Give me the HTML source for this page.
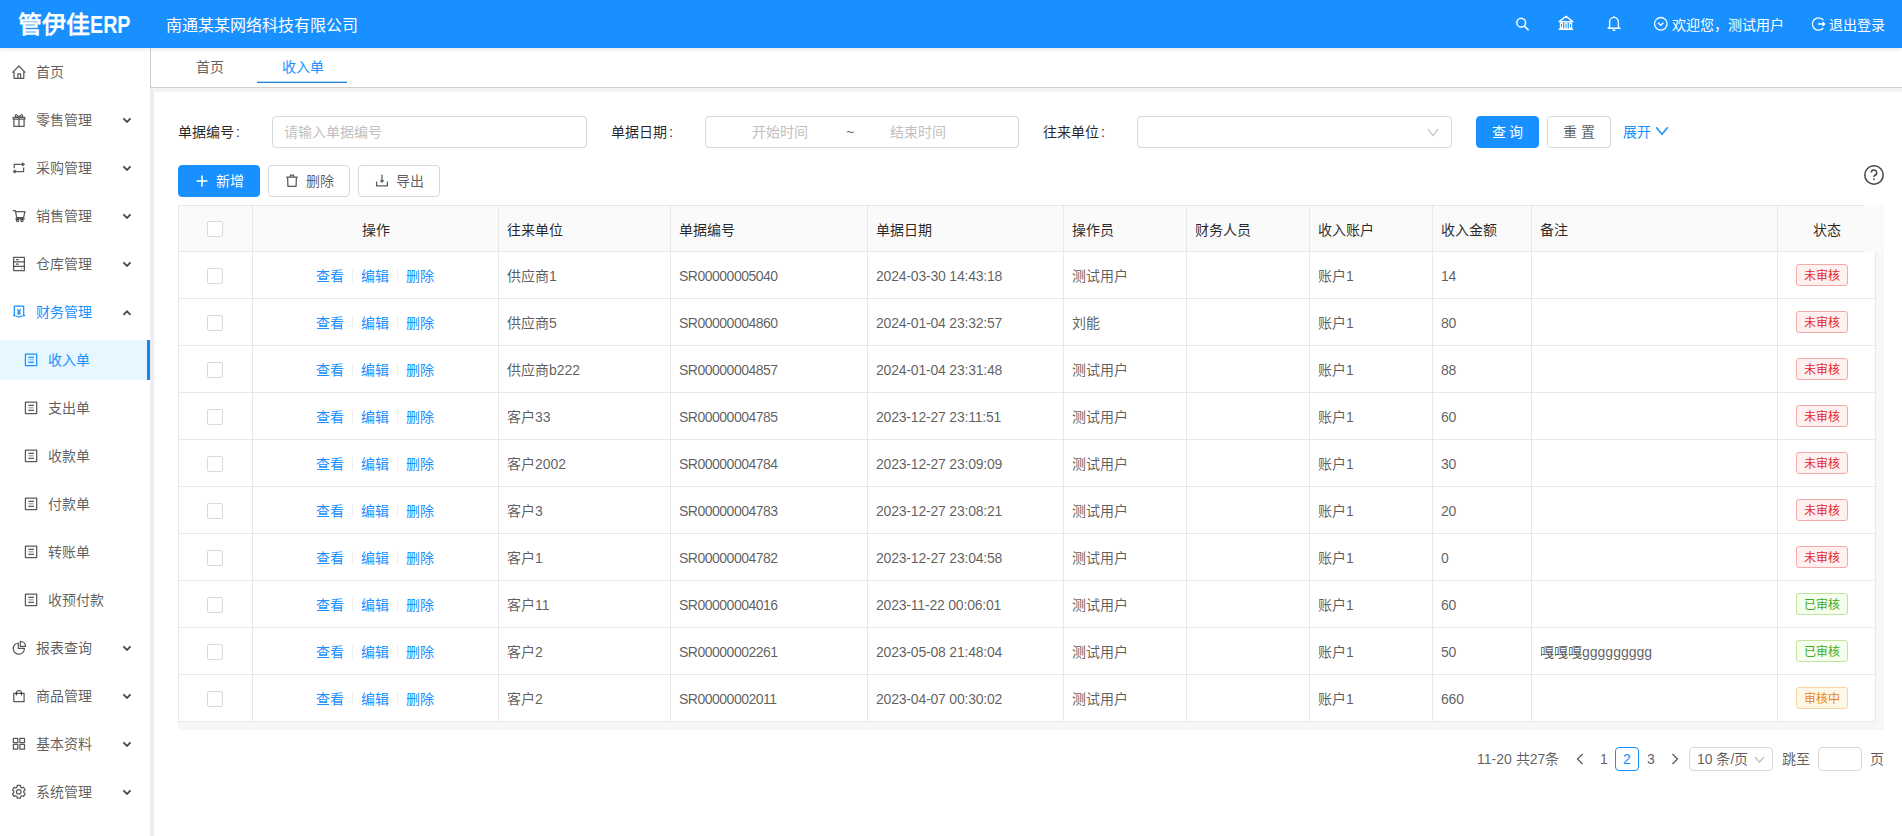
<!DOCTYPE html>
<html lang="zh-CN"><head><meta charset="utf-8"><style>
*{box-sizing:border-box;margin:0;padding:0}
html,body{width:1902px;height:836px;overflow:hidden;background:#fff}
body{font-family:"Liberation Sans",sans-serif;font-size:14px;color:rgba(0,0,0,.65);position:relative}
.abs{position:absolute}
.hdr{position:absolute;left:0;top:0;width:1902px;height:48px;background:#1890ff;color:#fff;z-index:5;box-shadow:0 1px 4px rgba(0,21,41,.12)}
.logo{position:absolute;left:18px;top:10px;font-size:24px;font-weight:bold;line-height:30px;white-space:nowrap}
.comp{position:absolute;left:166px;top:15px;font-size:16px;line-height:22px;white-space:nowrap}
.htxt{position:absolute;top:14px;font-size:14px;line-height:22px;white-space:nowrap}
.side{position:absolute;left:0;top:48px;width:150px;height:788px;background:#fff}
.mi{position:absolute;left:0;width:150px;height:40px;line-height:40px;white-space:nowrap}
.mi .t{position:absolute;left:36px;top:0}
.mi svg.ic{position:absolute;left:8px;top:8px}
.mi svg.ch{position:absolute;left:122px;top:16.5px}
.smi .t{left:48px}
.smi svg.ic{left:20px}
.strip{position:absolute;left:150px;top:88px;width:4px;height:748px;background:#ececf4}
.tabs{position:absolute;left:150px;top:48px;width:1752px;height:40px;border-left:1px solid #ccc;border-bottom:1px solid #d0d0d0;background:#fff}
.tab{position:absolute;top:8px;line-height:22px;white-space:nowrap}
.content{position:absolute;left:154px;top:88px;width:1748px;height:748px;background:#fff}
.bg2{position:absolute;left:151px;top:88px;width:1751px;height:4px;background:#f3f3f6}
.lbl{position:absolute;top:121px;line-height:22px;color:rgba(0,0,0,.85);white-space:nowrap}
.inp{position:absolute;top:116px;height:32px;border:1px solid #d9d9d9;border-radius:4px;background:#fff}
.ph{position:absolute;top:4px;line-height:22px;color:#bfbfbf;white-space:nowrap}
.btn{position:absolute;height:32px;border:1px solid #d9d9d9;border-radius:4px;background:#fff;line-height:30px;white-space:nowrap;color:rgba(0,0,0,.65)}
.btnp{background:#1890ff;border-color:#1890ff;color:#fff}
table.tb{position:absolute;left:178px;top:205px;border-collapse:separate;border-spacing:0;table-layout:fixed;border-top:1px solid #e8e8e8;border-left:1px solid #e8e8e8}
.tb th,.tb td{border-right:1px solid #e8e8e8;border-bottom:1px solid #e8e8e8;padding:0 8px;text-align:left;white-space:nowrap;overflow:hidden;font-weight:normal}
.tb th{height:46px;background:#fafafa;color:rgba(0,0,0,.85);padding-top:0}
.tb th.nt{padding-top:0}
.tb td{height:47px;color:rgba(0,0,0,.65);padding-top:0}
.tb td.lt{padding-top:1px;letter-spacing:-0.5px}
.tb td.dt{padding-top:1px;letter-spacing:-0.2px}
.tb td.nt{padding-top:0}
.tb .c{text-align:center}
.cb{position:relative;left:-1px;display:inline-block;width:16px;height:16px;border:1px solid #d9d9d9;border-radius:2px;background:#fff;vertical-align:middle}
.lk{color:#1890ff}
.dv{display:inline-block;width:1px;height:13px;background:#eeeeee;margin:0 8px;vertical-align:middle;position:relative;top:-1px}
.tag{position:relative;left:-1px;margin-right:8px;display:inline-block;height:22px;line-height:20px;padding:0 7px;font-size:12px;border:1px solid;border-radius:3px;vertical-align:middle}
.tr{color:#e3262e;background:#fff1f0;border-color:#f5aaa6}
.tg{color:#44a722;background:#f6ffed;border-color:#c0e3a0}
.to{color:#e5861e;background:#fff7e6;border-color:#f7d4a0}
.pg{position:absolute;top:748px;line-height:22px;white-space:nowrap}
</style></head><body>
<div class="hdr">
<div class="logo"><span style="font-weight:900">管伊佳</span><span style="display:inline-block;transform:scaleX(.82);transform-origin:0 50%">ERP</span></div>
<div class="comp">南通某某网络科技有限公司</div>
<svg class="" style="position:absolute;left:1516px;top:16px" width="16" height="16" viewBox="0 0 16 16"><circle cx="5.2" cy="6.7" r="4.4" fill="none" stroke="#fff" stroke-width="1.5"/><path d="M8.4 10 L12.6 14.3" stroke="#fff" stroke-width="1.6"/></svg><svg class="" style="position:absolute;left:1558px;top:15px" width="16" height="16" viewBox="0 0 16 16"><path d="M1.2 6.6 L8 1.3 L14.8 6.6 Z" fill="none" stroke="#fff" stroke-width="1.4" stroke-linejoin="round"/><rect x="2.4" y="7.9" width="2.2" height="5.4" fill="none" stroke="#fff" stroke-width="1.2"/><rect x="6.9" y="7.9" width="2.2" height="5.4" fill="none" stroke="#fff" stroke-width="1.2"/><rect x="11.4" y="7.9" width="2.2" height="5.4" fill="none" stroke="#fff" stroke-width="1.2"/><path d="M0.8 14.3 H15.2" stroke="#fff" stroke-width="1.5"/></svg><svg class="" style="position:absolute;left:1607px;top:15px" width="14" height="17" viewBox="0 0 14 17"><path d="M7 1.2 V2.4 M7 2.4 C4.3 2.4 2.6 4.6 2.6 7.3 V12.3 L1.1 13.3 H12.9 L11.4 12.3 V7.3 C11.4 4.6 9.7 2.4 7 2.4 Z M5.6 15.2 H8.4" fill="none" stroke="#fff" stroke-width="1.4" stroke-linejoin="round"/></svg><svg class="" style="position:absolute;left:1653px;top:16px" width="16" height="16" viewBox="0 0 16 16"><circle cx="7.8" cy="7.8" r="6.3" fill="none" stroke="#fff" stroke-width="1.3"/><path d="M5.2 6.8 L7.8 9.4 L10.4 6.8" fill="none" stroke="#fff" stroke-width="1.3"/></svg><svg class="" style="position:absolute;left:1811px;top:16px" width="16" height="16" viewBox="0 0 16 16"><path d="M12.3 4 A6.2 6.2 0 1 0 12.3 12" fill="none" stroke="#fff" stroke-width="1.3"/><path d="M7 8 H13.5 M11.6 6 L13.6 8 L11.6 10" fill="none" stroke="#fff" stroke-width="1.3"/></svg>
<div class="htxt" style="left:1672px">欢迎您，测试用户</div>
<div class="htxt" style="left:1829px">退出登录</div>
</div>
<div class="side"><div class="mi" style="top:4px;"><svg class="ic" width="24" height="24" viewBox="0 0 24 24"><path d="M4.4 12.6 L10.9 6 L17.4 12.6 M6 11.4 V18.3 H15.8 V11.4 M9.9 18.3 V13.9 H12.6 V18.3" fill="none" stroke="currentColor" stroke-width="1.25" stroke-linejoin="round"/></svg><span class="t">首页</span></div><div class="mi" style="top:52px;"><svg class="ic" width="24" height="24" viewBox="0 0 24 24"><path d="M5.2 9.3 H16.8 V11.2 H5.2 Z M5.9 11.2 V18.4 H16.1 V11.2 M11 9.3 V18.4 M11 9.2 C9.5 6.5 7.2 5.8 7.4 8 C7.5 9 9 9.2 11 9.2 C13 9.2 14.5 9 14.6 8 C14.8 5.8 12.5 6.5 11 9.2" fill="none" stroke="currentColor" stroke-width="1.25" stroke-linejoin="round"/></svg><span class="t">零售管理</span><svg class="ch" style="" width="10" height="7" viewBox="0 0 10 7"><path d="M1.4 1.4 L5 5 L8.6 1.4" fill="none" stroke="#4a4a4a" stroke-width="1.8"/></svg></div><div class="mi" style="top:100px;"><svg class="ic" width="24" height="24" viewBox="0 0 24 24"><path d="M6.2 12.3 V8.3 H16.1 M14.1 6.7 L16.3 8.3 L14.1 9.9 M15.6 11.5 V15.5 H5.6 M7.6 13.9 L5.4 15.5 L7.6 17.1" fill="none" stroke="currentColor" stroke-width="1.25" stroke-linejoin="round"/></svg><span class="t">采购管理</span><svg class="ch" style="" width="10" height="7" viewBox="0 0 10 7"><path d="M1.4 1.4 L5 5 L8.6 1.4" fill="none" stroke="#4a4a4a" stroke-width="1.8"/></svg></div><div class="mi" style="top:148px;"><svg class="ic" width="24" height="24" viewBox="0 0 24 24"><path d="M4.8 6.6 H7.4 L8.7 13.6 H15.6 L16.9 7.7 H7.6 M7.2 14.8 H16.8" fill="none" stroke="currentColor" stroke-width="1.25" stroke-linejoin="round"/><circle cx="9.5" cy="16.5" r="1.1" fill="none" stroke="currentColor" stroke-width="1.25" stroke-linejoin="round"/><circle cx="14" cy="16.5" r="1.1" fill="none" stroke="currentColor" stroke-width="1.25" stroke-linejoin="round"/></svg><span class="t">销售管理</span><svg class="ch" style="" width="10" height="7" viewBox="0 0 10 7"><path d="M1.4 1.4 L5 5 L8.6 1.4" fill="none" stroke="#4a4a4a" stroke-width="1.8"/></svg></div><div class="mi" style="top:196px;"><svg class="ic" width="24" height="24" viewBox="0 0 24 24"><rect x="5.6" y="5.4" width="10.8" height="13.1" fill="none" stroke="currentColor" stroke-width="1.25" stroke-linejoin="round"/><path d="M5.6 9.9 H16.4 M5.6 14.3 H16.4 M8 7.6 H10.8 M8 12.1 H10.8" fill="none" stroke="currentColor" stroke-width="1.25" stroke-linejoin="round"/><circle cx="13.5" cy="16.4" r="0.5" fill="currentColor"/></svg><span class="t">仓库管理</span><svg class="ch" style="" width="10" height="7" viewBox="0 0 10 7"><path d="M1.4 1.4 L5 5 L8.6 1.4" fill="none" stroke="#4a4a4a" stroke-width="1.8"/></svg></div><div class="mi" style="top:244px;color:#1890ff;"><svg class="ic" width="24" height="24" viewBox="0 0 24 24"><path d="M6.3 15.6 V6.1 H15.7 V15.6 M4.9 15.5 C7 15.6 9 16 11 17.2 C13 16 15 15.6 17.2 15.5 M9.3 9.2 L11 11.5 L12.7 9.2 M11 11.5 V15 M9.4 12.1 H12.6 M9.4 13.6 H12.6" fill="none" stroke="currentColor" stroke-width="1.25" stroke-linejoin="round"/></svg><span class="t">财务管理</span><svg class="ch" style="" width="10" height="7" viewBox="0 0 10 7"><path d="M1.4 5.9 L5 2.3 L8.6 5.9" fill="none" stroke="#4a4a4a" stroke-width="1.8"/></svg></div><div class="mi smi" style="top:292px;color:#1890ff;background:#e6f7ff;"><svg class="ic" width="24" height="24" viewBox="0 0 24 24"><rect x="5.4" y="6.2" width="11.3" height="11.3" fill="none" stroke="currentColor" stroke-width="1.25" stroke-linejoin="round"/><path d="M8.3 9.3 H13.9 M8.3 14.4 H13.9" fill="none" stroke="currentColor" stroke-width="1.25" stroke-linejoin="round"/><path d="M8.3 11.8 H13.9" fill="none" stroke="currentColor" stroke-width="1.25" stroke-linejoin="round" opacity=".55"/></svg><span class="t">收入单</span><div class="abs" style="left:147px;top:0;width:2.5px;height:40px;background:#1c84e6"></div></div><div class="mi smi" style="top:340px;"><svg class="ic" width="24" height="24" viewBox="0 0 24 24"><rect x="5.4" y="6.2" width="11.3" height="11.3" fill="none" stroke="currentColor" stroke-width="1.25" stroke-linejoin="round"/><path d="M8.3 9.3 H13.9 M8.3 14.4 H13.9" fill="none" stroke="currentColor" stroke-width="1.25" stroke-linejoin="round"/><path d="M8.3 11.8 H13.9" fill="none" stroke="currentColor" stroke-width="1.25" stroke-linejoin="round" opacity=".55"/></svg><span class="t">支出单</span></div><div class="mi smi" style="top:388px;"><svg class="ic" width="24" height="24" viewBox="0 0 24 24"><rect x="5.4" y="6.2" width="11.3" height="11.3" fill="none" stroke="currentColor" stroke-width="1.25" stroke-linejoin="round"/><path d="M8.3 9.3 H13.9 M8.3 14.4 H13.9" fill="none" stroke="currentColor" stroke-width="1.25" stroke-linejoin="round"/><path d="M8.3 11.8 H13.9" fill="none" stroke="currentColor" stroke-width="1.25" stroke-linejoin="round" opacity=".55"/></svg><span class="t">收款单</span></div><div class="mi smi" style="top:436px;"><svg class="ic" width="24" height="24" viewBox="0 0 24 24"><rect x="5.4" y="6.2" width="11.3" height="11.3" fill="none" stroke="currentColor" stroke-width="1.25" stroke-linejoin="round"/><path d="M8.3 9.3 H13.9 M8.3 14.4 H13.9" fill="none" stroke="currentColor" stroke-width="1.25" stroke-linejoin="round"/><path d="M8.3 11.8 H13.9" fill="none" stroke="currentColor" stroke-width="1.25" stroke-linejoin="round" opacity=".55"/></svg><span class="t">付款单</span></div><div class="mi smi" style="top:484px;"><svg class="ic" width="24" height="24" viewBox="0 0 24 24"><rect x="5.4" y="6.2" width="11.3" height="11.3" fill="none" stroke="currentColor" stroke-width="1.25" stroke-linejoin="round"/><path d="M8.3 9.3 H13.9 M8.3 14.4 H13.9" fill="none" stroke="currentColor" stroke-width="1.25" stroke-linejoin="round"/><path d="M8.3 11.8 H13.9" fill="none" stroke="currentColor" stroke-width="1.25" stroke-linejoin="round" opacity=".55"/></svg><span class="t">转账单</span></div><div class="mi smi" style="top:532px;"><svg class="ic" width="24" height="24" viewBox="0 0 24 24"><rect x="5.4" y="6.2" width="11.3" height="11.3" fill="none" stroke="currentColor" stroke-width="1.25" stroke-linejoin="round"/><path d="M8.3 9.3 H13.9 M8.3 14.4 H13.9" fill="none" stroke="currentColor" stroke-width="1.25" stroke-linejoin="round"/><path d="M8.3 11.8 H13.9" fill="none" stroke="currentColor" stroke-width="1.25" stroke-linejoin="round" opacity=".55"/></svg><span class="t">收预付款</span></div><div class="mi" style="top:580px;"><svg class="ic" width="24" height="24" viewBox="0 0 24 24"><path d="M10.3 7 A5.6 5.6 0 1 0 16.4 12.4 H10.3 Z" fill="none" stroke="currentColor" stroke-width="1.25" stroke-linejoin="round"/><path d="M12.3 5.4 V10.3 H17.6 A5.3 5.3 0 0 0 12.3 5.4 Z" fill="none" stroke="currentColor" stroke-width="1.25" stroke-linejoin="round"/></svg><span class="t">报表查询</span><svg class="ch" style="" width="10" height="7" viewBox="0 0 10 7"><path d="M1.4 1.4 L5 5 L8.6 1.4" fill="none" stroke="#4a4a4a" stroke-width="1.8"/></svg></div><div class="mi" style="top:628px;"><svg class="ic" width="24" height="24" viewBox="0 0 24 24"><rect x="5.8" y="9.3" width="10.3" height="8.2" fill="none" stroke="currentColor" stroke-width="1.25" stroke-linejoin="round"/><path d="M8.4 11.5 V8.6 A2.6 2.4 0 0 1 13.5 8.6 V11.5" fill="none" stroke="currentColor" stroke-width="1.25" stroke-linejoin="round"/></svg><span class="t">商品管理</span><svg class="ch" style="" width="10" height="7" viewBox="0 0 10 7"><path d="M1.4 1.4 L5 5 L8.6 1.4" fill="none" stroke="#4a4a4a" stroke-width="1.8"/></svg></div><div class="mi" style="top:676px;"><svg class="ic" width="24" height="24" viewBox="0 0 24 24"><rect x="5.4" y="6.3" width="4.4" height="4.2" fill="none" stroke="currentColor" stroke-width="1.25" stroke-linejoin="round"/><rect x="11.9" y="6.3" width="4.6" height="4.2" fill="none" stroke="currentColor" stroke-width="1.25" stroke-linejoin="round"/><rect x="5.4" y="12.4" width="4.4" height="4.8" fill="none" stroke="currentColor" stroke-width="1.25" stroke-linejoin="round"/><rect x="11.9" y="12.4" width="4.6" height="4.8" fill="none" stroke="currentColor" stroke-width="1.25" stroke-linejoin="round"/></svg><span class="t">基本资料</span><svg class="ch" style="" width="10" height="7" viewBox="0 0 10 7"><path d="M1.4 1.4 L5 5 L8.6 1.4" fill="none" stroke="#4a4a4a" stroke-width="1.8"/></svg></div><div class="mi" style="top:724px;"><svg class="ic" width="24" height="24" viewBox="0 0 24 24"><path d="M9.20 5.40 L12.40 5.40 L12.67 7.16 L13.88 7.86 L15.55 7.22 L17.14 9.98 L15.75 11.10 L15.75 12.50 L17.14 13.62 L15.55 16.38 L13.88 15.74 L12.67 16.44 L12.40 18.20 L9.20 18.20 L8.93 16.44 L7.72 15.74 L6.05 16.38 L4.46 13.62 L5.85 12.50 L5.85 11.10 L4.46 9.98 L6.05 7.22 L7.72 7.86 L8.93 7.16 Z" fill="none" stroke="currentColor" stroke-width="1.25" stroke-linejoin="round"/><circle cx="10.8" cy="11.8" r="2.3" fill="none" stroke="currentColor" stroke-width="1.25" stroke-linejoin="round"/></svg><span class="t">系统管理</span><svg class="ch" style="" width="10" height="7" viewBox="0 0 10 7"><path d="M1.4 1.4 L5 5 L8.6 1.4" fill="none" stroke="#4a4a4a" stroke-width="1.8"/></svg></div></div>
<div class="strip"></div>
<div class="tabs">
<div class="tab" style="left:45px">首页</div>
<div class="tab" style="left:131px;color:#1890ff">收入单</div>
<div class="abs" style="left:106px;top:34px;width:90px;height:1px;background:#2a82d8;box-shadow:0 -1px 0 rgba(24,144,255,.35)"></div>
</div>
<div class="content"></div>
<div class="bg2"></div>

<div class="lbl" style="left:178px">单据编号<span style="margin-left:2px">:</span></div>
<div class="inp" style="left:272px;width:315px"><span class="ph" style="left:11px">请输入单据编号</span></div>
<div class="lbl" style="left:611px">单据日期<span style="margin-left:2px">:</span></div>
<div class="inp" style="left:705px;width:314px"><span class="ph" style="left:46px">开始时间</span><span class="ph" style="left:140px;color:rgba(0,0,0,.65)">~</span><span class="ph" style="left:184px">结束时间</span></div>
<div class="lbl" style="left:1043px">往来单位<span style="margin-left:2px">:</span></div>
<div class="inp" style="left:1137px;width:315px"><svg class="" style="position:absolute;right:12px;top:10.5px" width="12" height="9" viewBox="0 0 12 9"><path d="M1 1.2 L6 7.6 L11 1.2" fill="none" stroke="#bfbfbf" stroke-width="1.2"/></svg></div>
<div class="btn btnp" style="left:1476px;top:116px;width:63px;text-align:center">查 询</div>
<div class="btn" style="left:1547px;top:116px;width:64px;text-align:center">重 置</div>
<div class="lbl" style="left:1623px;color:#1890ff">展开</div><svg width="14" height="10" viewBox="0 0 14 10" style="position:absolute;left:1655px;top:126px"><path d="M1.2 1.2 L7 8.2 L12.8 1.2" fill="none" stroke="#1890ff" stroke-width="1.5"/></svg>
<div class="btn btnp" style="left:178px;top:165px;width:82px"><svg class="" style="position:absolute;left:16px;top:8px" width="14" height="14" viewBox="0 0 14 14"><path d="M7 1.5 V12.5 M1.5 7 H12.5" stroke="#fff" stroke-width="1.6"/></svg><span class="abs" style="left:37px;top:0">新增</span></div>
<div class="btn" style="left:268px;top:165px;width:82px"><svg class="" style="position:absolute;left:16px;top:7px" width="14" height="14" viewBox="0 0 14 14"><path d="M5.4 3.8 V2.1 H8.6 V3.8 M1.3 4 H12.7 M2.6 4 L2.9 13.3 H11.1 L11.4 4" fill="none" stroke="currentColor" stroke-width="1.25" stroke-linejoin="round"/></svg><span class="abs" style="left:37px;top:0">删除</span></div>
<div class="btn" style="left:358px;top:165px;width:82px"><svg class="" style="position:absolute;left:16px;top:7px" width="14" height="14" viewBox="0 0 14 14"><path d="M7 1.8 V9 M5.3 7.3 L7 9.2 L8.7 7.3 M1.6 8.6 V12.9 H12.4 V8.6" fill="none" stroke="currentColor" stroke-width="1.25" stroke-linejoin="round"/></svg><span class="abs" style="left:37px;top:0">导出</span></div>
<svg style="position:absolute;left:1864px;top:165px" width="20" height="20" viewBox="0 0 20 20"><circle cx="10" cy="10" r="9.2" fill="none" stroke="#444" stroke-width="1.5"/><path d="M7.3 7.6 A2.7 2.7 0 1 1 10.9 10.2 C10.2 10.6 10 11 10 12" fill="none" stroke="#444" stroke-width="1.5"/><rect x="9.2" y="13.3" width="1.6" height="1.6" fill="#444"/></svg>

<table class="tb" style="width:1698px"><colgroup><col style="width:74px"><col style="width:246px"><col style="width:172px"><col style="width:197px"><col style="width:196px"><col style="width:123px"><col style="width:123px"><col style="width:123px"><col style="width:99px"><col style="width:246px"><col style="width:98px"></colgroup><thead><tr><th class="c nt"><span class="cb"></span></th><th class="c">操作</th><th>往来单位</th><th>单据编号</th><th>单据日期</th><th>操作员</th><th>财务人员</th><th>收入账户</th><th>收入金额</th><th>备注</th><th class="c">状态</th></tr></thead><tbody><tr><td class="c nt"><span class="cb"></span></td><td class="c"><span style="position:relative;left:-1px;top:-0.5px"><span class="lk">查看</span><span class="dv"></span><span class="lk">编辑</span><span class="dv"></span><span class="lk">删除</span></span></td><td>供应商1</td><td class="lt">SR00000005040</td><td class="dt">2024-03-30 14:43:18</td><td>测试用户</td><td></td><td>账户1</td><td class="dt">14</td><td></td><td class="c nt"><span class="tag tr"><span style="position:relative;top:1px">未审核</span></span></td></tr><tr><td class="c nt"><span class="cb"></span></td><td class="c"><span style="position:relative;left:-1px;top:-0.5px"><span class="lk">查看</span><span class="dv"></span><span class="lk">编辑</span><span class="dv"></span><span class="lk">删除</span></span></td><td>供应商5</td><td class="lt">SR00000004860</td><td class="dt">2024-01-04 23:32:57</td><td>刘能</td><td></td><td>账户1</td><td class="dt">80</td><td></td><td class="c nt"><span class="tag tr"><span style="position:relative;top:1px">未审核</span></span></td></tr><tr><td class="c nt"><span class="cb"></span></td><td class="c"><span style="position:relative;left:-1px;top:-0.5px"><span class="lk">查看</span><span class="dv"></span><span class="lk">编辑</span><span class="dv"></span><span class="lk">删除</span></span></td><td>供应商b222</td><td class="lt">SR00000004857</td><td class="dt">2024-01-04 23:31:48</td><td>测试用户</td><td></td><td>账户1</td><td class="dt">88</td><td></td><td class="c nt"><span class="tag tr"><span style="position:relative;top:1px">未审核</span></span></td></tr><tr><td class="c nt"><span class="cb"></span></td><td class="c"><span style="position:relative;left:-1px;top:-0.5px"><span class="lk">查看</span><span class="dv"></span><span class="lk">编辑</span><span class="dv"></span><span class="lk">删除</span></span></td><td>客户33</td><td class="lt">SR00000004785</td><td class="dt">2023-12-27 23:11:51</td><td>测试用户</td><td></td><td>账户1</td><td class="dt">60</td><td></td><td class="c nt"><span class="tag tr"><span style="position:relative;top:1px">未审核</span></span></td></tr><tr><td class="c nt"><span class="cb"></span></td><td class="c"><span style="position:relative;left:-1px;top:-0.5px"><span class="lk">查看</span><span class="dv"></span><span class="lk">编辑</span><span class="dv"></span><span class="lk">删除</span></span></td><td>客户2002</td><td class="lt">SR00000004784</td><td class="dt">2023-12-27 23:09:09</td><td>测试用户</td><td></td><td>账户1</td><td class="dt">30</td><td></td><td class="c nt"><span class="tag tr"><span style="position:relative;top:1px">未审核</span></span></td></tr><tr><td class="c nt"><span class="cb"></span></td><td class="c"><span style="position:relative;left:-1px;top:-0.5px"><span class="lk">查看</span><span class="dv"></span><span class="lk">编辑</span><span class="dv"></span><span class="lk">删除</span></span></td><td>客户3</td><td class="lt">SR00000004783</td><td class="dt">2023-12-27 23:08:21</td><td>测试用户</td><td></td><td>账户1</td><td class="dt">20</td><td></td><td class="c nt"><span class="tag tr"><span style="position:relative;top:1px">未审核</span></span></td></tr><tr><td class="c nt"><span class="cb"></span></td><td class="c"><span style="position:relative;left:-1px;top:-0.5px"><span class="lk">查看</span><span class="dv"></span><span class="lk">编辑</span><span class="dv"></span><span class="lk">删除</span></span></td><td>客户1</td><td class="lt">SR00000004782</td><td class="dt">2023-12-27 23:04:58</td><td>测试用户</td><td></td><td>账户1</td><td class="dt">0</td><td></td><td class="c nt"><span class="tag tr"><span style="position:relative;top:1px">未审核</span></span></td></tr><tr><td class="c nt"><span class="cb"></span></td><td class="c"><span style="position:relative;left:-1px;top:-0.5px"><span class="lk">查看</span><span class="dv"></span><span class="lk">编辑</span><span class="dv"></span><span class="lk">删除</span></span></td><td>客户11</td><td class="lt">SR00000004016</td><td class="dt">2023-11-22 00:06:01</td><td>测试用户</td><td></td><td>账户1</td><td class="dt">60</td><td></td><td class="c nt"><span class="tag tg"><span style="position:relative;top:1px">已审核</span></span></td></tr><tr><td class="c nt"><span class="cb"></span></td><td class="c"><span style="position:relative;left:-1px;top:-0.5px"><span class="lk">查看</span><span class="dv"></span><span class="lk">编辑</span><span class="dv"></span><span class="lk">删除</span></span></td><td>客户2</td><td class="lt">SR00000002261</td><td class="dt">2023-05-08 21:48:04</td><td>测试用户</td><td></td><td>账户1</td><td class="dt">50</td><td>嘎嘎嘎ggggggggg</td><td class="c nt"><span class="tag tg"><span style="position:relative;top:1px">已审核</span></span></td></tr><tr><td class="c nt"><span class="cb"></span></td><td class="c"><span style="position:relative;left:-1px;top:-0.5px"><span class="lk">查看</span><span class="dv"></span><span class="lk">编辑</span><span class="dv"></span><span class="lk">删除</span></span></td><td>客户2</td><td class="lt">SR00000002011</td><td class="dt">2023-04-07 00:30:02</td><td>测试用户</td><td></td><td>账户1</td><td class="dt">660</td><td></td><td class="c nt"><span class="tag to"><span style="position:relative;top:1px">审核中</span></span></td></tr></tbody></table>
<div class="abs" style="left:178px;top:722px;width:1706px;height:8px;background:#f6f6f6"></div>
<div class="abs" style="left:1876px;top:252px;width:8px;height:478px;background:#f7f7f7"></div>
<div class="abs" style="left:1864px;top:205px;width:20px;height:47px;background:#fafafa"></div>

<div class="pg" style="left:1477px">11-20 共27条</div>
<svg class="" style="position:absolute;left:1576px;top:753px" width="8" height="12" viewBox="0 0 8 12"><path d="M6.5 1 L1.5 6 L6.5 11" fill="none" stroke="rgba(0,0,0,.65)" stroke-width="1.3"/></svg>
<div class="pg" style="left:1600px">1</div>
<div class="abs" style="left:1615px;top:747px;width:24px;height:24px;border:1px solid #1890ff;border-radius:4px;color:#1890ff;text-align:center;line-height:22px">2</div>
<div class="pg" style="left:1647px">3</div>
<svg class="" style="position:absolute;left:1671px;top:753px" width="8" height="12" viewBox="0 0 8 12"><path d="M1.5 1 L6.5 6 L1.5 11" fill="none" stroke="rgba(0,0,0,.65)" stroke-width="1.3"/></svg>
<div class="abs" style="left:1689px;top:747px;width:84px;height:24px;border:1px solid #d9d9d9;border-radius:4px;"><span class="abs" style="left:7px;top:0;line-height:22px;white-space:nowrap">10 条/页</span><svg class="" style="position:absolute;left:64px;top:8px" width="11" height="7" viewBox="0 0 11 7"><path d="M1 1 L5.5 6 L10 1" fill="none" stroke="#bfbfbf" stroke-width="1.2"/></svg></div>
<div class="pg" style="left:1782px">跳至</div>
<div class="abs" style="left:1818px;top:747px;width:44px;height:24px;border:1px solid #d9d9d9;border-radius:4px"></div>
<div class="pg" style="left:1870px">页</div>

</body></html>
